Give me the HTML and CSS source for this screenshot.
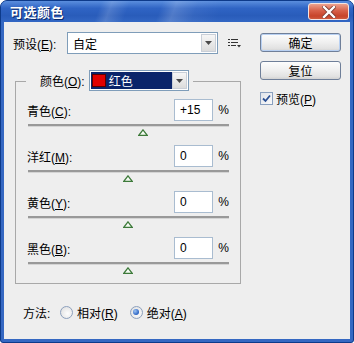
FILE: index.html
```html
<!DOCTYPE html>
<html lang="zh-CN">
<head>
    <meta charset="UTF-8">
    <title>可选颜色</title>
    <link rel="stylesheet" href="styles.css">
</head>
<body>
<div class="window">
    <div class="titlebar">
        <span class="title">可选颜色</span>
        <span class="close-btn">
            <svg width="14" height="12" viewBox="0 0 14 12">
                <path d="M2 1 L12 11 M12 1 L2 11" stroke="#7a3a30" stroke-width="4" stroke-linecap="square"/>
                <path d="M2 1 L12 11 M12 1 L2 11" stroke="#ffffff" stroke-width="2.4" stroke-linecap="square"/>
            </svg>
        </span>
    </div>

    <div class="dlg-body">
        <div class="main">
            <div class="preset-row">
                <span class="preset-label">预设(<u>E</u>):</span>
                <div class="combo preset-combo">
                    <span class="combo-text">自定</span>
                    <span class="combo-btn"><svg width="7" height="4" viewBox="0 0 7 4"><path d="M0 0 H7 L3.5 4 Z" fill="#4a4a4a"/></svg></span>
                </div>
                <svg class="menu-icon" width="13" height="9" viewBox="0 0 13 9">
                    <rect x="0" y="0" width="2" height="1" fill="#333"/>
                    <rect x="3" y="0" width="7" height="1" fill="#333"/>
                    <rect x="0" y="3" width="2" height="1" fill="#333"/>
                    <rect x="3" y="3" width="7" height="1" fill="#333"/>
                    <rect x="0" y="6" width="2" height="1" fill="#333"/>
                    <rect x="3" y="6" width="5" height="1" fill="#333"/>
                    <path d="M9 6 H13 L11 8.5 Z" fill="#333"/>
                </svg>
            </div>

            <div class="group">
                <div class="group-head">
                    <span class="group-label">颜色(<u>O</u>):</span>
                    <div class="combo color-combo">
                        <span class="color-sel"><span class="swatch"></span>红色</span>
                        <span class="combo-btn"><svg width="7" height="4" viewBox="0 0 7 4"><path d="M0 0 H7 L3.5 4 Z" fill="#4a4a4a"/></svg></span>
                    </div>
                </div>

                <div class="adj-list">
                    <div class="adj">
                        <div class="adj-top">
                            <span class="adj-label">青色(<u>C</u>):</span>
                            <span class="num">+15</span>
                            <span class="pct">%</span>
                        </div>
                        <div class="track"></div>
                        <div class="thumb-row"><svg class="thumb" style="margin-left:110px" width="10" height="7" viewBox="0 0 10 7"><path d="M5 0.8 L9.2 6.3 H0.8 Z" fill="#f4faf2" stroke="#3d7a3a" stroke-width="1.2"/></svg></div>
                    </div>
                    <div class="adj">
                        <div class="adj-top">
                            <span class="adj-label">洋红(<u>M</u>):</span>
                            <span class="num">0</span>
                            <span class="pct">%</span>
                        </div>
                        <div class="track"></div>
                        <div class="thumb-row"><svg class="thumb" style="margin-left:95px" width="10" height="7" viewBox="0 0 10 7"><path d="M5 0.8 L9.2 6.3 H0.8 Z" fill="#f4faf2" stroke="#3d7a3a" stroke-width="1.2"/></svg></div>
                    </div>
                    <div class="adj">
                        <div class="adj-top">
                            <span class="adj-label">黄色(<u>Y</u>):</span>
                            <span class="num">0</span>
                            <span class="pct">%</span>
                        </div>
                        <div class="track"></div>
                        <div class="thumb-row"><svg class="thumb" style="margin-left:95px" width="10" height="7" viewBox="0 0 10 7"><path d="M5 0.8 L9.2 6.3 H0.8 Z" fill="#f4faf2" stroke="#3d7a3a" stroke-width="1.2"/></svg></div>
                    </div>
                    <div class="adj">
                        <div class="adj-top">
                            <span class="adj-label">黑色(<u>B</u>):</span>
                            <span class="num">0</span>
                            <span class="pct">%</span>
                        </div>
                        <div class="track"></div>
                        <div class="thumb-row"><svg class="thumb" style="margin-left:95px" width="10" height="7" viewBox="0 0 10 7"><path d="M5 0.8 L9.2 6.3 H0.8 Z" fill="#f4faf2" stroke="#3d7a3a" stroke-width="1.2"/></svg></div>
                    </div>
                </div>
            </div>

            <div class="method-row">
                <span class="method-label">方法:</span>
                <span class="radio"></span>
                <span class="radio-text">相对(<u>R</u>)</span>
                <span class="radio checked"></span>
                <span class="radio-text">绝对(<u>A</u>)</span>
            </div>
        </div>

        <div class="side">
            <div class="btn btn-default">确定</div>
            <div class="btn">复位</div>
            <div class="check-row">
                <span class="checkbox">
                    <svg width="9" height="9" viewBox="0 0 9 9"><path d="M1 4.5 L3.5 7 L8 1.5" fill="none" stroke="#2a4f94" stroke-width="1.8"/></svg>
                </span>
                <span>预览(<u>P</u>)</span>
            </div>
        </div>
    </div>
</div>
</body>
</html>
```

FILE: styles.css
```css
* {
    box-sizing: border-box;
}
body {
    margin: 0;
    font-family: "Liberation Sans", "Noto Sans CJK SC", sans-serif;
    font-size: 12px;
    color: #000;
    background: #fff;
}
u {
    text-decoration: underline;
    text-underline-offset: 1px;
}
.window {
    width: 354px;
    height: 343px;
    border: 1px solid #0d3a8a;
    border-radius: 7px 7px 3px 3px;
    background: #3568c2;
    display: flex;
    flex-direction: column;
    overflow: hidden;
}
.titlebar {
    height: 21px;
    flex: none;
    display: flex;
    align-items: center;
    justify-content: space-between;
    padding: 0 4px 0 9px;
    background:
        linear-gradient(110deg, rgba(255,255,255,0) 28%, rgba(255,255,255,0.16) 31%, rgba(255,255,255,0) 36%,
                        rgba(255,255,255,0) 45%, rgba(255,255,255,0.18) 49%, rgba(255,255,255,0.05) 55%, rgba(255,255,255,0) 62%),
        linear-gradient(#5a8ede, #2f64c4 35%, #295cba 70%, #3367c4);
}
.title {
    color: #fff;
    font-weight: bold;
    font-size: 13px;
    text-shadow: 1px 1px 0 #0b2a6a;
    letter-spacing: 0.5px;
}
.close-btn {
    width: 41px;
    height: 17px;
    border: 1px solid #f4e4e0;
    border-radius: 3px;
    background: linear-gradient(#eda28e, #d76048 45%, #c7442a 80%, #cf5a3e);
    display: flex;
    align-items: center;
    justify-content: center;
}
.dlg-body {
    flex: 1;
    margin: 0 3px 3px;
    background: #eeeeee;
    display: flex;
}
.main {
    width: 246px;
    flex: none;
    padding: 10px 0 0 9px;
}
.preset-row {
    display: flex;
    align-items: center;
    height: 22px;
}
.preset-label {
    width: 54px;
}
.combo {
    height: 22px;
    border: 1px solid #7f9db9;
    background: #fff;
    display: flex;
    align-items: stretch;
    padding: 1px;
}
.preset-combo {
    width: 151px;
}
.combo-text {
    flex: 1;
    padding-left: 4px;
    display: flex;
    align-items: center;
}
.combo-btn {
    width: 15px;
    border: 1px solid #c9cfd8;
    background: linear-gradient(#f6f6f6, #dcdcdc);
    display: flex;
    align-items: center;
    justify-content: center;
}
.menu-icon {
    margin-left: 10px;
}
.group {
    margin: 27px 0 0 2px;
    width: 226px;
    border: 1px solid #a8a8a8;
}
.group-head {
    display: flex;
    align-items: center;
    width: fit-content;
    height: 21px;
    margin: -12px 0 0 10px;
    padding: 0 4px 0 14px;
    background: #eeeeee;
}
.group-label {
    margin-right: 4px;
}
.color-combo {
    width: 100px;
    height: 21px;
}
.color-sel {
    flex: 1;
    background: #0a246a;
    color: #fff;
    display: flex;
    align-items: center;
    padding-left: 1px;
}
.swatch {
    width: 14px;
    height: 13px;
    background: #e00000;
    border: 1px solid #5a0000;
    margin-right: 3px;
}
.adj-list {
    padding: 8px 11px 0 12px;
}
.adj {
    margin-bottom: 10px;
}
.adj-top {
    display: flex;
    align-items: center;
    height: 22px;
}
.adj-label {
    flex: 1;
    margin-left: -1px;
}
.num {
    width: 39px;
    height: 22px;
    border: 1px solid #a9bcd0;
    background: #fff;
    padding-left: 5px;
    display: flex;
    align-items: center;
}
.pct {
    width: 16px;
    text-align: right;
}
.track {
    margin-top: 3px;
    height: 3px;
    background: #999999;
    border-bottom: 1px solid #d4d4d4;
}
.thumb-row {
    height: 8px;
    padding-top: 2px;
    display: flex;
}
.method-row {
    display: flex;
    align-items: center;
    height: 16px;
    margin-top: 20px;
    padding-left: 10px;
}
.method-label {
    width: 37px;
}
.radio {
    width: 13px;
    height: 13px;
    border-radius: 50%;
    border: 1px solid #8ca0bd;
    background: radial-gradient(circle at 60% 60%, #fdfdfd, #dcdcdc);
    display: flex;
    align-items: center;
    justify-content: center;
}
.radio.checked::after {
    content: "";
    width: 6px;
    height: 6px;
    border-radius: 50%;
    background: radial-gradient(circle at 35% 35%, #9cc4f4, #2a62c2 70%);
}
.radio-text {
    margin-left: 4px;
}
.radio-text + .radio {
    margin-left: 12px;
}
.side {
    margin-left: 10px;
    padding-top: 11px;
}
.btn {
    width: 81px;
    height: 19px;
    border: 1px solid #6f7f99;
    border-radius: 3px;
    background: linear-gradient(#fdfdfd, #efefef 50%, #e2e2e2 85%, #d2d2d2);
    display: flex;
    align-items: center;
    justify-content: center;
    margin-bottom: 9px;
}
.btn-default {
    box-shadow: inset 0 0 0 1px #b8d0f2;
}
.check-row {
    display: flex;
    align-items: center;
    margin-top: 12px;
    height: 13px;
}
.checkbox {
    width: 13px;
    height: 13px;
    border: 1px solid #8aa0bf;
    background: linear-gradient(135deg, #dfe3ea, #fafafa);
    display: flex;
    align-items: center;
    justify-content: center;
    margin-right: 3px;
}
```
